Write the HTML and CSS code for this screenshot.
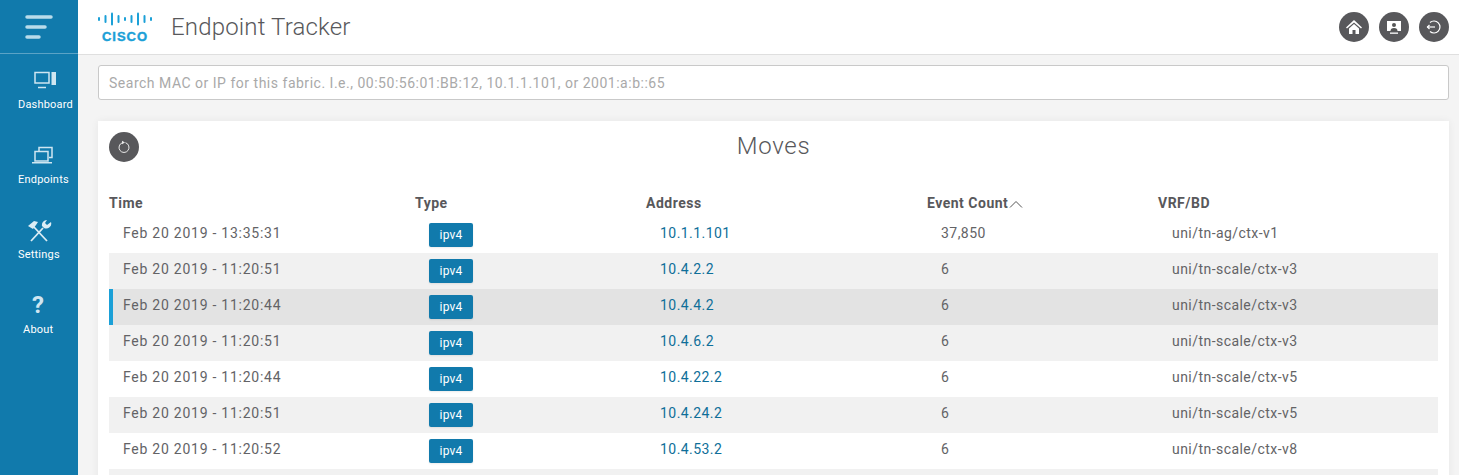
FILE: index.html
```html
<!DOCTYPE html>
<html>
	<head>
	<title>Endpoint Tracker</title>
	<link rel="stylesheet" href="styles.css">
	</head>
	<body>
		<div class="app">
			<div class="sidebar">
				<div class="toggle">
					<svg width="28" height="26" viewBox="0 0 28 26"><g stroke="#b9dbea" stroke-width="3.500" stroke-linecap="round"><line x1="2" y1="3" x2="26" y2="3"/><line x1="2" y1="13" x2="20" y2="13"/><line x1="2" y1="23" x2="14" y2="23"/></g></svg>
				</div>
				<div class="nav_item">
					<svg class="nav_icon" width="26" height="22" viewBox="0 0 26 22"><g fill="none" stroke="#cfe6f1" stroke-width="1.500"><rect x="2" y="2.500" width="14" height="10.500"/><line x1="5" y1="17.500" x2="13" y2="17.500"/></g><rect x="18.500" y="2" width="4.500" height="13" fill="#cfe6f1"/></svg>
					<span>Dashboard</span>
				</div>
				<div class="nav_item">
					<svg class="nav_icon" width="26" height="22" viewBox="0 0 26 22"><g fill="none" stroke="#cfe6f1" stroke-width="1.500"><path d="M9 6V2.500h13v10h-3"/><rect x="5" y="6.500" width="13" height="9.500"/></g><path d="M2 17h20v1.500H2z" fill="#cfe6f1"/></svg>
					<span>Endpoints</span>
				</div>
				<div class="nav_item">
					<svg class="nav_icon" width="26" height="24" viewBox="0 0 26 24"><g fill="none" stroke="#dcedf5" stroke-width="1.800"><line x1="7" y1="7" x2="21" y2="22"/><line x1="17" y1="9" x2="5" y2="22"/></g><path d="M2 7l6-5 4 1-2 3-3 4z" fill="#dcedf5"/><path d="M25 3a5 5 0 0 1-7 6l-2-2a5 5 0 0 1 5-6l-2 3 2 2z" fill="#dcedf5"/></svg>
					<span>Settings</span>
				</div>
				<div class="nav_item nav_about">
					<span class="nav_help">?</span>
					<span>About</span>
				</div>
			</div>
			<div class="main">
				<div class="header">
					<svg class="logo" width="54" height="34" viewBox="0 0 54 34"><g fill="#1ba0d7"><rect x="0" y="7" width="2" height="4" rx="1"/><rect x="6.500" y="5" width="2" height="8" rx="1"/><rect x="13" y="2.500" width="2" height="13" rx="1"/><rect x="19.500" y="5" width="2" height="8" rx="1"/><rect x="26" y="7" width="2" height="4" rx="1"/><rect x="32.500" y="5" width="2" height="8" rx="1"/><rect x="39" y="2.500" width="2" height="13" rx="1"/><rect x="45.500" y="5" width="2" height="8" rx="1"/><rect x="52" y="7" width="2" height="4" rx="1"/></g><text x="27" y="31" text-anchor="middle" class="logo_text">CISCO</text></svg>
					<div class="app_title">Endpoint Tracker</div>
					<div class="header_buttons">
						<div class="round_btn"><svg width="18" height="18" viewBox="0 0 18 18"><path d="M9 2L1 9.500l1 1L9 4.500l7 6 1-1z" fill="#fff"/><path d="M4 10.500L9 6l5 4.500V16h-3.500v-4h-3v4H4z" fill="#fff"/></svg></div>
						<div class="round_btn"><svg width="18" height="18" viewBox="0 0 18 18"><path d="M2 3h14v10H2z" fill="#fff"/><circle cx="9" cy="7" r="2" fill="#555"/><path d="M5.500 13a3.500 3 0 0 1 7 0z" fill="#555"/><rect x="5" y="14.500" width="8" height="1.300" fill="#fff"/></svg></div>
						<div class="round_btn"><svg width="18" height="18" viewBox="0 0 18 18"><g fill="none" stroke="#fff" stroke-width="1.200"><path d="M5 4.500a6 6 0 1 1 0 9"/><line x1="2" y1="9" x2="10" y2="9"/><path d="M4.500 7L2.500 9l2 2"/></g></svg></div>
					</div>
				</div>
				<div class="content">
					<input class="search" type="text" placeholder="Search MAC or IP for this fabric. I.e., 00:50:56:01:BB:12, 10.1.1.101, or 2001:a:b::65">
					<div class="card">
						<div class="card_head">
							<div class="round_btn"><svg width="18" height="18" viewBox="0 0 18 18"><g fill="none" stroke="#e8e8e8" stroke-width="1"><path d="M7.500 4.700a5 5 0 1 0 3 0"/></g><path d="M7 2.700l3 1.800-3 1.800z" fill="#e8e8e8"/></svg></div>
							<h1 class="card_title">Moves</h1>
						</div>
						<div class="row row_head">
							<div>Time</div>
							<div>Type</div>
							<div>Address</div>
							<div class="sorted">Event Count<svg width="14" height="8" viewBox="0 0 14 8"><path d="M1 7.500l6-6 6 6" fill="none" stroke="#555" stroke-width="1"/></svg></div>
							<div>VRF/BD</div>
						</div>
						<div class="row">
							<div class="cell time">Feb 20 2019 - 13:35:31</div>
							<div class="cell"><span class="badge">ipv4</span></div>
							<div class="cell"><a class="addr">10.1.1.101</a></div>
							<div class="cell">37,850</div>
							<div class="cell">uni/tn-ag/ctx-v1</div>
						</div>
						<div class="row odd">
							<div class="cell time">Feb 20 2019 - 11:20:51</div>
							<div class="cell"><span class="badge">ipv4</span></div>
							<div class="cell"><a class="addr">10.4.2.2</a></div>
							<div class="cell">6</div>
							<div class="cell">uni/tn-scale/ctx-v3</div>
						</div>
						<div class="row selected">
							<div class="cell time">Feb 20 2019 - 11:20:44</div>
							<div class="cell"><span class="badge">ipv4</span></div>
							<div class="cell"><a class="addr">10.4.4.2</a></div>
							<div class="cell">6</div>
							<div class="cell">uni/tn-scale/ctx-v3</div>
						</div>
						<div class="row odd">
							<div class="cell time">Feb 20 2019 - 11:20:51</div>
							<div class="cell"><span class="badge">ipv4</span></div>
							<div class="cell"><a class="addr">10.4.6.2</a></div>
							<div class="cell">6</div>
							<div class="cell">uni/tn-scale/ctx-v3</div>
						</div>
						<div class="row">
							<div class="cell time">Feb 20 2019 - 11:20:44</div>
							<div class="cell"><span class="badge">ipv4</span></div>
							<div class="cell"><a class="addr">10.4.22.2</a></div>
							<div class="cell">6</div>
							<div class="cell">uni/tn-scale/ctx-v5</div>
						</div>
						<div class="row odd">
							<div class="cell time">Feb 20 2019 - 11:20:51</div>
							<div class="cell"><span class="badge">ipv4</span></div>
							<div class="cell"><a class="addr">10.4.24.2</a></div>
							<div class="cell">6</div>
							<div class="cell">uni/tn-scale/ctx-v5</div>
						</div>
						<div class="row">
							<div class="cell time">Feb 20 2019 - 11:20:52</div>
							<div class="cell"><span class="badge">ipv4</span></div>
							<div class="cell"><a class="addr">10.4.53.2</a></div>
							<div class="cell">6</div>
							<div class="cell">uni/tn-scale/ctx-v8</div>
						</div>
						<div class="row odd"></div>
					</div>
				</div>
			</div>
		</div>
	</body>
</html>
```

FILE: styles.css
```css
html, body {
	margin: 0px;
	width: 100%;
	height: 100%;
	overflow: hidden;
	font-family: Roboto, "Liberation Sans", sans-serif;
	color: #636366;
}

.app {
	display: flex;
	height: 100%;
}

.sidebar {
	flex: 0 0 78px;
	background: #117aac;
	color: #fff;
	font-size: 11px;
}

.toggle {
	height: 53px;
	border-bottom: 1px solid #5ba3c6;
	display: flex;
	align-items: center;
	justify-content: center;
}

.nav_item {
	height: 75px;
	width: fit-content;
	box-sizing: border-box;
	margin-left: 18px;
	padding-top: 15px;
	display: flex;
	flex-direction: column;
	align-items: center;
	letter-spacing: .2px;
}

.nav_about {
	margin-left: 23px;
}

.nav_icon {
	height: 24px;
	margin-bottom: 5px;
}

.nav_help {
	height: 24px;
	margin-bottom: 5px;
	font-size: 24px;
	line-height: 22px;
	font-weight: 700;
	color: #cfe6f1;
}

.main {
	flex: 1;
	min-width: 0;
	background: #f4f4f4;
	overflow: hidden;
}

.header {
	height: 54px;
	background: #fff;
	border-bottom: 1px solid #dfdfdf;
	box-sizing: content-box;
	display: flex;
	align-items: center;
	padding: 0 10px 0 20px;
}

.logo {
	margin-right: 19px;
}

.logo_text {
	font-family: "Liberation Sans", sans-serif;
	font-size: 13px;
	font-weight: 700;
	letter-spacing: 1px;
	fill: #1ba0d7;
	stroke: #1ba0d7;
	stroke-width: .4px;
}

.app_title {
	font-size: 24px;
	font-weight: 300;
	letter-spacing: .16px;
	color: #58585b;
}

.header_buttons {
	margin-left: auto;
	display: flex;
	gap: 10px;
}

.round_btn {
	width: 30px;
	height: 30px;
	border-radius: 50%;
	background: #58585b;
	display: flex;
	align-items: center;
	justify-content: center;
}

.content {
	padding: 10px 10px 0 20px;
}

.search {
	display: block;
	width: 100%;
	height: 35px;
	box-sizing: border-box;
	border: 1px solid #c9c9c9;
	border-radius: 3px;
	background: #fff;
	padding: 0 10px;
	margin-bottom: 21px;
	font-family: inherit;
	font-size: 14px;
	letter-spacing: .51px;
	outline: none;
}

.search::placeholder {
	color: #a9a9a9;
}

.card {
	background: #fff;
	padding: 11px 11px 0 11px;
	box-shadow: 0 0 8px rgba(0,0,0,.06);
}

.card_head {
	display: grid;
	grid-template-columns: 1fr auto 1fr;
	height: 62px;
}

.card_title {
	grid-column: 2;
	grid-row: 1;
	margin: 0;
	font-size: 24px;
	font-weight: 300;
	line-height: 28px;
	letter-spacing: .7px;
	color: #58585b;
}

.round_btn:first-child {
	grid-column: 1;
	grid-row: 1;
}

.row {
	display: grid;
	grid-template-columns: 306px 231px 281px 231px 1fr;
	height: 36px;
	box-sizing: border-box;
	font-size: 14px;
	letter-spacing: .45px;
}

.row_head {
	height: 23px;
	font-weight: 700;
	letter-spacing: .5px;
	line-height: 18px;
	color: #58585b;
}

.sorted svg {
	margin-left: 1px;
}

.odd {
	background: #f1f1f1;
}

.selected {
	background: #e3e3e3;
	box-shadow: inset 4px 0 0 #1ba0d7;
}

.cell {
	padding: 6px 0 0 14px;
	line-height: 20px;
}

.time {
	letter-spacing: .75px;
}

.badge {
	display: block;
	width: 44px;
	height: 24px;
	border-radius: 2px;
	background: #117aac;
	color: #fff;
	font-size: 12px;
	line-height: 25px;
	text-align: center;
	letter-spacing: .2px;
	box-shadow: 0 1px 2px rgba(0,0,0,.08);
}

.addr {
	color: #0f6f99;
}
```
